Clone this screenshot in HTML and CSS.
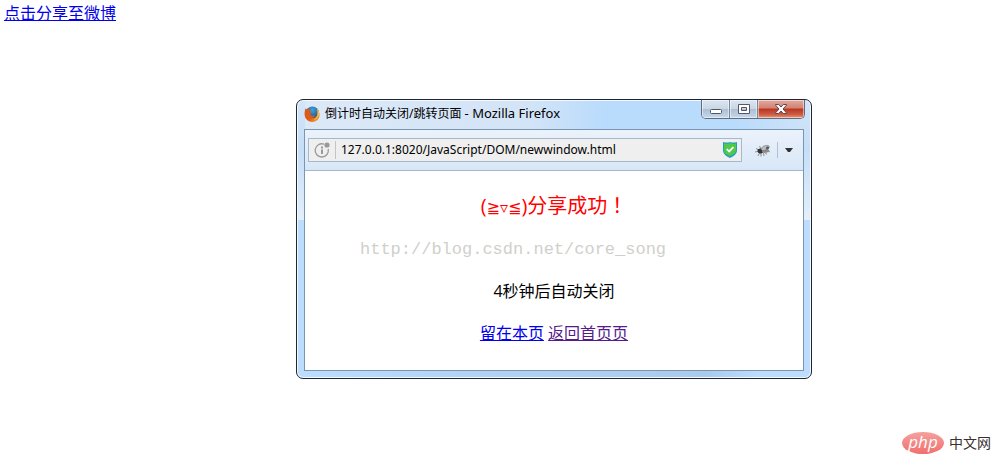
FILE: index.html
```html
<!DOCTYPE html>
<html lang="zh-CN">
<head>
<meta charset="utf-8">
<title>分享</title>
<link rel="stylesheet" href="styles.css">
</head>
<body>
<a class="share" href="#share">点击分享至微博</a>

<section class="window" aria-label="Mozilla Firefox">
  <header class="titlebar">
    <svg class="firefox" viewBox="0 0 16 16" aria-hidden="true">
      <defs>
        <linearGradient id="fox" x1="0" y1="0" x2="1" y2="1">
          <stop offset="0" stop-color="#d9581c"/><stop offset=".55" stop-color="#e05a18"/><stop offset="1" stop-color="#f9b233"/>
        </linearGradient>
        <radialGradient id="globe" cx=".5" cy=".25" r=".8">
          <stop offset="0" stop-color="#3fa3dc"/><stop offset="1" stop-color="#123a7c"/>
        </radialGradient>
      </defs>
      <circle cx="8.4" cy="7.4" r="6.8" fill="url(#globe)"/>
      <path d="M1.6 2.2 3 3.6c1-.5 2-.4 2.800 0C5.500 4.800 6 5.400 7.800 5.700c0 1-1.300 1.200-1.800 1.900.5 2.200 3 2.700 5 1.600-.7 2.300-3 3-5 2.200 3.200 1.900 7.700-.3 7.300-4.400-.1-1.300-.5-2.100-1.100-2.800 3.700 1.600 4 5.800 2.300 8.600-2.700 4.300-9.600 4-12.300.2C.2 10.300 0 6 1.600 2.200Z" fill="url(#fox)"/>
      <path d="M12.800 2.200c2.700 2.400 3 6 1.400 8.600-1.200 2-3.300 3.200-5.700 3.500 4-1.600 6.600-5 4.300-12.100Z" fill="#fbc83c"/>
    </svg>
    <h1 class="title">倒计时自动关闭/跳转页面 <span class="app-name">- Mozilla Firefox</span></h1>
    <div class="controls">
      <button class="control control-min" type="button" aria-label="最小化">
        <svg width="12" height="5" viewBox="0 0 12 5"><rect x=".5" y=".5" width="11" height="4" rx="1" fill="#fff" stroke="#535666"/></svg>
      </button>
      <button class="control" type="button" aria-label="最大化">
        <svg width="12" height="10" viewBox="0 0 12 10"><path d="M.5.5h11v9H.5ZM3.500 3.500v3h5v-3Z" fill="#fff" fill-rule="evenodd" stroke="#535666"/></svg>
      </button>
      <button class="control control-close" type="button" aria-label="关闭">
        <svg width="12" height="10" viewBox="0 0 12 10"><path d="M.5.5h3.200L6 3 8.300.5h3.200v.6L8 5l3.500 3.900v.6H8.300L6 7 3.700 9.500H.5v-.6L4 5 .5 1.100Z" fill="#fff" stroke="#5c4652"/></svg>
      </button>
    </div>
  </header>

  <div class="client">
    <div class="toolbar">
      <div class="address">
        <svg class="info" width="17" height="17" viewBox="0 0 17 17" aria-hidden="true">
          <path d="M10 2.200A6.600 6.600 0 1 0 14.200 7" fill="none" stroke="#999" stroke-width="1.300"/>
          <path d="M7 4.500h2v2H7ZM7 7.500h2V12H7Z" fill="#999"/>
          <circle cx="13" cy="3" r="2.600" fill="#999"/>
        </svg>
        <input class="url" type="text" aria-label="地址" value="127.0.0.1:8020/JavaScript/DOM/newwindow.html">
        <svg class="shield" width="14" height="16" viewBox="0 0 14 16" aria-hidden="true">
          <path d="M0 0c3 .8 5 .8 7 0 2 .8 4 .8 7 0v8c0 4-3 6-7 8-4-2-7-4-7-8Z" fill="#1f9fc0"/>
          <path d="M1 1.500c2.500.5 4.300.4 6-.4 1.700.8 3.500.9 6 .4V8c0 3.300-2.500 4.500-6 6C3.500 12.500 1 11.300 1 8Z" fill="#50c84c"/>
          <path d="m3.800 7 2.400 2.500 4.200-4.300" fill="none" stroke="#fff" stroke-width="1.800"/>
        </svg>
      </div>
      <button class="tool" type="button" aria-label="Firebug">
        <svg width="16" height="13" viewBox="0 0 16 13">
          <path d="M1 4.500 4 6M0 8l4-1M3 12l2-4M6 12.500V8M9 12l-.5-3M12 10.500 9 8M6 5 4.500 2M13 7l2 1" fill="none" stroke="#777" stroke-width=".8"/>
          <ellipse cx="5.500" cy="7" rx="3" ry="2.400" fill="#333"/>
          <path d="M6 5.500C7 2 11 .5 14 2c1 2-2 4-6 4.800Z" fill="#bbb" stroke="#777" stroke-width=".7"/>
          <path d="M7 8c3 1.500 6 1 7.500-1.500C13 5 9.500 5.500 7 7Z" fill="#888"/>
          <circle cx="12.500" cy="4" r="1.500" fill="#555"/>
        </svg>
      </button>
      <button class="more" type="button" aria-label="更多">
        <svg width="8" height="4" viewBox="0 0 8 4"><path d="M0 0h8L5 4H3Z" fill="#333"/></svg>
      </button>
    </div>
    <main class="content">
      <h2 class="success">(<span class="face">≧▿≦</span>)分享成功<span class="mark" lang="zh-TW">！</span></h2>
      <p class="watermark">http://blog.csdn.net/core_song</p>
      <p class="countdown">4秒钟后自动关闭</p>
      <p class="links"><a href="#stay">留在本页</a> <a class="visited" href="#home">返回首页页</a></p>
    </main>
  </div>
</section>

<footer class="brand"><span class="brand-php">php</span><span class="brand-name">中文网</span></footer>
</body>
</html>
```
FILE: styles.css
```css
* { box-sizing: border-box; }

body {
  margin: 0;
  min-height: 100vh;
  padding: 3px 4px;
  background: #fff;
  color: #000;
  font: 16px/20px "Open Sans", "Noto Sans CJK SC", sans-serif;
}

a { color: #00e; }
a.visited { color: #551a8b; }
.share { display: inline-block; }

button { margin: 0; padding: 0; border: 0; background: none; }
svg { display: block; flex: none; }

.window {
  position: absolute;
  top: 99px;
  left: 296px;
  width: 516px;
  padding: 0 7px 7px;
  border: 1px solid #1d2634;
  border-radius: 7px;
  background:
    linear-gradient(#d3e5f8, #c5def7 50px, #e4effa 120px, transparent 120px) left / 8px 100% no-repeat,
    linear-gradient(#d3e5f8, #c5def7 50px, #e4effa 120px, transparent 120px) right / 8px 100% no-repeat,
    linear-gradient(90deg, #dce9f7, #d3e4f7 45%, #b9dbfc 60%, #b9dbfc 85%, #cfe3f8) top / 100% 30px no-repeat,
    linear-gradient(90deg, #bcddfe, #b1d1f4 40%, #a9cbed 80%, #bcddfe 90%);
  box-shadow: inset 0 0 0 1px #f4f9ff;
  font-size: 12px;
}

.titlebar { display: flex; height: 29px; }
.firefox { width: 16px; height: 16px; margin-top: 6px; }

.title {
  flex: 1;
  margin: 3px 0 0 5px;
  font: 12px/20px "Noto Sans", "Noto Sans CJK SC", sans-serif;
}

.app-name { font-size: 13px; }

.controls {
  display: flex;
  height: 19px;
  margin-right: -1px;
  border: 1px solid #616b7c;
  border-top: 0;
  border-radius: 0 0 5px 5px;
  overflow: hidden;
}

.control {
  display: flex;
  align-items: center;
  justify-content: center;
  width: 28px;
  border-right: 1px solid #7c8797;
  background: linear-gradient(#dce6f1, #cad6e4 48%, #aabdd2 50%, #c6d8eb);
  box-shadow: inset 0 0 0 1px #ffffff80;
}

.control-min { padding-top: 5px; }

.control-close {
  width: 46px;
  border: 0;
  background: linear-gradient(#e3aa9e, #d18173 45%, #b9351f 50%, #ce5b42 80%, #df9b7c);
}

.client { border: 1px solid #7895b2; background: #fff; }

.toolbar {
  display: flex;
  align-items: center;
  height: 41px;
  padding: 0 10px 0 3px;
  border-bottom: 1px solid #a3b8d0;
  background: linear-gradient(#ebf2fb, #d8e7f7);
}

.address {
  display: flex;
  flex: 1;
  align-items: center;
  height: 24px;
  padding: 0 4px 0 5px;
  border: 1px solid #a8b8cb;
  background: #efefef;
}

.url {
  flex: 1;
  min-width: 0;
  height: 18px;
  margin-left: 4px;
  padding: 0 0 0 5px;
  border: 0;
  border-left: 1px solid #c4c4c4;
  outline: 0;
  background: none;
  color: #000;
  font: 12px/18px "Noto Sans", "Noto Sans CJK SC", sans-serif;
}

.tool { margin: 0 6px 0 13px; }

.more { height: 16px; padding-left: 7px; border-left: 1px solid #b4c0cf; }

.content {
  display: flex;
  flex-direction: column;
  padding: 23px 0 26px;
  font-size: 16px;
  line-height: 22px;
  text-align: center;
}

.content p { margin: 0; }
.content .success { margin: 0; color: #f00; font-size: 20px; font-weight: 400; }
.face { font: 16px/20px "DejaVu Sans", sans-serif; }
.mark { font-family: "Noto Sans CJK TC", sans-serif; }

.content .watermark {
  align-self: flex-start;
  margin: 21px 0 19px 55px;
  color: #d0d0cb;
  font: 17px/22px "Liberation Mono", monospace;
}

.content .links { margin-top: 20px; }

.brand {
  position: absolute;
  right: 10px;
  bottom: 22px;
  display: flex;
  align-items: center;
  gap: 5px;
  color: #3b3030;
  font-size: 14px;
}

.brand-php {
  width: 42px;
  height: 22px;
  border-radius: 50%;
  background: linear-gradient(#f5a09c, #f0706f);
  color: #fff;
  font: italic 17px/20px "Open Sans", sans-serif;
  text-align: center;
}
```
